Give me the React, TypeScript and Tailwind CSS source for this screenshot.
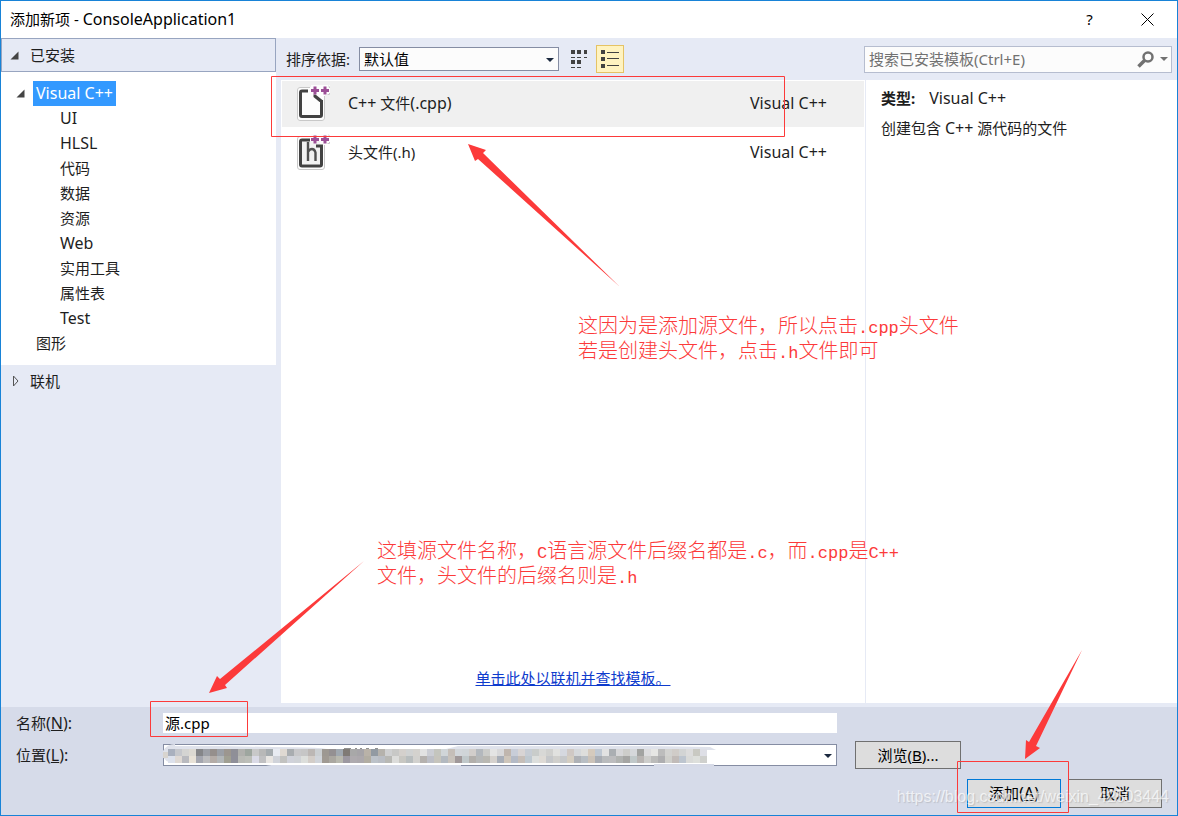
import type { ReactNode } from 'react';

const languages = ['UI', 'HLSL', '代码', '数据', '资源', 'Web', '实用工具', '属性表', 'Test'];

const mosaicTop =
  'a9b0be c5c7cc d4d4d2 dcd9d2 858689 9c9fa6 958f8c 9b9fa6 9c968f 8f8f97 b0b0ad 9ea69f c8c8c8 b8b8b8 a5abaf e8ebf2 dfd9d2 a9adb0 c8c8ca c6c6c6 bcb7b4 cbcfd2 9d9892 949092 a0a8b0 7f7a75 a8a8a8 a6a4a8 b9b2a8 929aa2 b5b2ac cfd0d1 c8c8c6 d4d0cc d0d2d2 d4d2ce e2e2e2 cbcdd4 c4c5be d0d5d8 c5beb8 d2d6da d0d5d8 d2cecb b3b8bd cbccc9 e4e4e4 d8d8da c0b6ae c8cdd8 d8d4d4 c6ccd4 c9ccca d8d8d6 d0d0ce e1e1df d5d8df cfc8c4 d5d8db dededc d5cabd bfc8d3 e2e2e2 aaaeb2 d6d6d8 cdcdca d5d7da a2a3a1 dcdcde e6e6e4 bcbcbc d2d2d0 d0ccc8 d2d4d4 dcdcdc c9c9c2 dedfe6'.split(' ');

const mosaicBottom =
  'dce1ec ded8d3 b9babf e8e2d7 a4a6af bcbcbe b4aca7 b2b6b8 a09f92 8f8f99 b9bab5 bcbeb8 dadae6 c0c0c2 e8e5e2 d0d3da c2c2c0 d0d2da cfd2d6 dcdedb d3cdc8 d0d4da a09a93 aaa7a0 b8b8ae 9c98a0 aeaaae aca8ac b2ada2 bcc2c9 b9bdc4 b8b8b4 dcdcda c8c7c2 b8bdbe d2d1ce b5b1ae bcbec6 c6c4bc b3b9c0 c8c2bb a09899 c0c8ca b2afab b6b8b8 b9b8b2 d5d1cd a8aeb8 cec5ba b4bac6 c6beb8 bec8d0 dcdedc dedad5 c5c7ca d0cfcc c6c8ca d4cdc1 aeb1b6 b8bec4 cbc2b8 a8acb3 b9bbbd bcbcbe b0b2b0 a5a5a3 c0c8c9 b8b4b2 cdcdcb bbbbba aeaeb0 cfcfcb c1bbb8 bdc5cf d9dad8 dddfdb cfd0cd'.split(' ');

// Latin text runs one size above the Chinese text beside it
const Latin = ({ children }: { children: ReactNode }) => (
  <span className="text-base leading-none">{children}</span>
);

const DownArrow = ({ className }: { className: string }) => (
  <svg viewBox="0 0 8 4" className={`pointer-events-none absolute h-1 w-2 ${className}`}>
    <path d="M0 0h8L4 4z" fill="currentColor" />
  </svg>
);

const OpenMark = () => (
  <svg viewBox="0 0 9 9" className="h-[9px] w-[9px] shrink-0">
    <path d="M8.5 0.5v8h-8z" fill="#444" />
  </svg>
);

const FileIcon = ({ header }: { header?: boolean }) => (
  <svg viewBox="0 0 36 40" className="h-10 w-9 shrink-0">
    <path d="M4 4h11V2h19v10h-5v23q0 3-3 3H4q-3 0-3-3V7q0-3 3-3z" fill="#fdfdfd" />
    <path d="M28.500 13v22q0 2.500-2.500 2.500H4q-2.500 0-2.500-2.500V7q0-2.500 2.500-2.500h10M32.500 3q1 0 1 2M33.500 10v1.500h-2" fill="none" stroke="#c8c8c8" />
    {header && <path d="M6 9h18v23H6z" fill="#f2f2f2" />}
    <path
      d={header ? 'M14 8H6q-1.500 0-1.500 1.500v23q0 1.500 1.500 1.500h18q1.500 0 1.500-1.500V14H20' : 'M12 8H6q-1.500 0-1.500 1.500v22.500q0 1.500 1.500 1.500h18q1.500 0 1.500-1.500V17'}
      fill="none"
      stroke="#424242"
      strokeWidth="3"
    />
    {header ? (
      <path d="M12 10v19M12 20q1.500-3 4-3t3.500 3.500V29" fill="none" stroke="#505050" strokeWidth="2.400" />
    ) : (
      <path d="M17.500 11.500h2l7.500 6v1.500h-3.500l-6-5z" fill="#424242" />
    )}
    <path d="M15 7.500h8M19 3.500v8M25 7.500h8M29 3.500v8" stroke="#9b4f96" strokeWidth="3" />
  </svg>
);

const TemplateRow = ({ icon, name, selected }: { icon: ReactNode; name: ReactNode; selected?: boolean }) => (
  <button className={`flex h-[46px] w-full items-center pb-[2px] text-left ${selected ? 'bg-[#f0f0f0]' : ''}`}>
    <span className="ml-[14px] mr-4">{icon}</span>
    <span className="flex-1">{name}</span>
    <span className="w-[114px]"><Latin>Visual C++</Latin></span>
  </button>
);

const Sidebar = () => (
  <aside className="w-[275px] shrink-0">
    <button className="flex h-[34px] w-full items-center gap-[11px] border border-[#98a5c0] px-2">
      <OpenMark />
      已安装
    </button>
    <ul className="bg-white pb-[9px] pt-[9px] leading-[25px]">
      <li className="flex items-center gap-2 pl-[15px]">
        <OpenMark />
        <a href="#cpp" className="h-[25px] bg-[#3399ff] px-[3px] text-white"><Latin>Visual C++</Latin></a>
      </li>
      {languages.map((item) => (
        <li key={item} className="h-[25px] pl-[59px]">
          {/^[A-Z]/.test(item) ? <Latin>{item}</Latin> : item}
        </li>
      ))}
      <li className="pl-[35px]">图形</li>
    </ul>
    <button className="flex h-8 w-full items-center gap-[11px] px-[10px]">
      <svg viewBox="0 0 8 12" className="h-3 w-2">
        <path d="M2.500 1v10L7 6z" fill="none" stroke="#555" />
      </svg>
      联机
    </button>
  </aside>
);

const Toolbar = () => (
  <div className="flex h-[42px] items-center pl-[5px] pr-[5px]">
    <label htmlFor="sort" className="w-[73px]">排序依据:</label>
    <div className="relative w-[200px]">
      <select id="sort" className="h-6 w-full appearance-none border border-[#858da3] bg-[#fcfcfc] px-1 text-black">
        <option>默认值</option>
      </select>
      <DownArrow className="right-[5px] top-[11px] text-[#1b293e]" />
    </div>
    <button aria-label="Small icons" className="ml-[6px] flex h-7 w-7 items-center justify-center">
      <svg viewBox="0 0 16 18" className="h-[18px] w-4" fill="#424242">
        <path d="M0 0h4v4H0zM6 0h4v4H6zM13 0h3v4h-3zM0 7h4v1H0zM6 7h4v1H6zM13 7h3v1h-3zM0 10h4v4H0zM6 10h4v4H6zM0 17h4v1H0zM6 17h4v1H6z" />
      </svg>
    </button>
    <button aria-label="Details" className="ml-[3px] flex h-7 w-7 items-center justify-center border border-[#e5c365] bg-[#fff3c0]">
      <svg viewBox="0 0 20 18" className="h-[18px] w-5" fill="#424242">
        <path d="M1 0h4v4H1zM7 2h12v1H7zM1 7h4v4H1zM7 8h12v1H7zM1 14h4v4H1zM7 15h12v1H7z" />
      </svg>
    </button>
    <div className="relative ml-auto w-[308px]">
      <input
        type="text"
        aria-label="Search"
        placeholder="搜索已安装模板(Ctrl+E)"
        className="h-[27px] w-full border border-[#b6bdcf] bg-[#fcfcfc] px-1 pr-10 placeholder:text-[#717171]"
      />
      <svg viewBox="0 0 17 17" className="absolute right-[18px] top-[5px] h-[17px] w-[17px]" fill="none" stroke="#717171">
        <circle cx="11" cy="6" r="4.500" strokeWidth="2.500" />
        <path d="M7.500 9.500L1.500 15.500" strokeWidth="3.500" />
      </svg>
      <DownArrow className="right-1 top-[11px] text-[#717171]" />
    </div>
  </div>
);

const Templates = () => (
  <div className="flex flex-1">
    <div className="flex flex-1 flex-col bg-white px-px pt-px">
      <div className="flex flex-col gap-[3px]">
        <TemplateRow icon={<FileIcon />} name={<><Latin>C++</Latin> 文件<Latin>(.cpp)</Latin></>} selected />
        <TemplateRow icon={<FileIcon header />} name="头文件(.h)" />
      </div>
      <a href="#online" className="mb-[14px] mt-auto self-center text-[#0e3bcd] underline">单击此处以联机并查找模板。</a>
    </div>
    <div className="w-[312px] border-l border-[#e6eaf5] bg-white px-[15px] pt-[7px]">
      <p className="mb-2"><b className="mr-[14px]">类型:</b><Latin>Visual C++</Latin></p>
      <p>创建包含 <Latin>C++</Latin> 源代码的文件</p>
    </div>
  </div>
);

const Mosaic = () => (
  <svg viewBox="0 0 560 26" className="pointer-events-none absolute left-0 top-0 h-[26px] w-[560px]">
    <path d="M103 21h195v2h-4v2H150q-40-2-47-4zM491 20h60v3h-60z" fill="#d6dae7" />
    <path d="M0 7q4-7 12-7v2h45l56 1h40q10 2 22 3l50 1h15v-3l56-2h195l56 1 8 4v12H12Q0 18 0 11z" fill="#dfe2eb" />
    <path d="M108 2h187l-12 3-30 1h-80q-10-3-65-3z" fill="#fff" />
    <path d="M181 5h7M192 5h2M197 5h2M203 5h3M212 5h3" stroke="#222" />
    <path d="M0 8h5v6H0z" fill="#d8d4cf" />
    <path d="M544 6h16v13h-16z" fill="#fff" />
    {mosaicTop.map((c, i) => <rect key={i} x={5 + i * 7} y="5" width="7" height="7" fill={`#${c}`} />)}
    {mosaicBottom.map((c, i) => <rect key={i} x={5 + i * 7} y="12" width="7" height="7" fill={`#${c}`} />)}
  </svg>
);

const Footer = () => (
  <footer className="h-[108px] bg-[#d6dbe9] px-[15px] pt-[6px]">
    <div className="flex h-5 items-center">
      <label htmlFor="name" className="w-[147px]">名称<Latin>(<u>N</u>):</Latin></label>
      <input id="name" type="text" defaultValue="源.cpp" className="h-5 flex-1 bg-white px-[2px] text-black" />
      <div className="w-[325px]" />
    </div>
    <div className="mt-2 flex h-7 items-center">
      <label htmlFor="location" className="w-[147px]">位置<Latin>(<u>L</u>):</Latin></label>
      <div className="relative flex-1">
        <select id="location" className="block h-[22px] w-full appearance-none border border-[#858da3] bg-white">
          <option></option>
        </select>
        <Mosaic />
        <DownArrow className="right-[5px] top-[10px] text-[#1b293e]" />
      </div>
      <button className="ml-[18px] mr-[201px] h-7 w-[106px] border border-[#707070] bg-[#dddddd] text-black">浏览(<u>B</u>)...</button>
    </div>
    <div className="mt-[10px] flex justify-end gap-[7px] text-black">
      <button className="h-[29px] w-[94px] border border-[#0078d7] bg-[#dddddd] pb-[2px]">添加<Latin>(<u>A</u>)</Latin></button>
      <button className="h-[29px] w-[94px] border border-[#707070] bg-[#dddddd] pb-[2px]">取消</button>
    </div>
  </footer>
);

const Code = ({ children }: { children: string }) => (
  <span className="font-['Liberation_Mono',monospace] text-[17px] leading-none">{children}</span>
);

// Red marks drawn over the dialog
const Annotations = () => (
  <div className="pointer-events-none absolute -left-px -top-px text-xl font-light leading-[25px] text-[#fc3a3a]">
    <svg viewBox="0 0 1178 816" className="h-[816px] w-[1178px] max-w-none">
      <g fill="none" stroke="#fc3a3a">
        <path d="M271.500 76.500h513v60h-513zM150.500 701.500h97v35h-97zM957.500 761.500h111v51h-111z" />
      </g>
      <g fill="#fc3a3a">
        <path d="M468 144L486 150L483 153L620 287L478 159L475 161z" />
        <path d="M209 693L217 676L220 679L364 561L225 685L227 688z" />
        <path d="M1025 759L1026 740L1029 742L1082 650L1036 746L1040 748z" />
      </g>
    </svg>
    <p className="absolute left-[578px] top-[313px] whitespace-nowrap">
      这因为是添加源文件，所以点击<Code>.cpp</Code>头文件<br />
      若是创建头文件，点击<Code>.h</Code>文件即可
    </p>
    <p className="absolute left-[377px] top-[538px] whitespace-nowrap">
      这填源文件名称，<Code>C</Code>语言源文件后缀名都是<Code>.c</Code>，而<Code>.cpp</Code>是<Code>C++</Code><br />
      文件，头文件的后缀名则是<Code>.h</Code>
    </p>
  </div>
);

const App = () => {
  return (
    <main className="relative flex min-h-screen flex-col border border-[#1883d7] bg-[#e6eaf5] font-['Noto_Sans','Noto_Sans_CJK_SC',sans-serif] text-[15px] leading-[22px] text-[#1e1e1e]">
      <header className="flex h-[37px] items-center bg-white pb-px pl-[9px] text-black">
        <h1 className="flex-1">添加新项 - <Latin>ConsoleApplication1</Latin></h1>
        <button aria-label="Help" className="w-[57px]">?</button>
        <button aria-label="Close" className="flex w-[59px] justify-center">
          <svg viewBox="0 0 13 13" className="h-[13px] w-[13px]" stroke="#000">
            <path d="M0.500 0.500l12 12M12.500 0.500l-12 12" />
          </svg>
        </button>
      </header>
      <div className="flex flex-1 gap-[5px] pb-1">
        <Sidebar />
        <section className="flex flex-1 flex-col">
          <Toolbar />
          <Templates />
        </section>
      </div>
      <Footer />
      <Annotations />
      <p className="pointer-events-none absolute bottom-[6px] right-2 font-['Liberation_Sans',sans-serif] text-base text-white/70 [text-shadow:1px_1px_1px_#9996]">
        https://blog.csdn.net/weixin_42503444
      </p>
    </main>
  );
};

export default App;
